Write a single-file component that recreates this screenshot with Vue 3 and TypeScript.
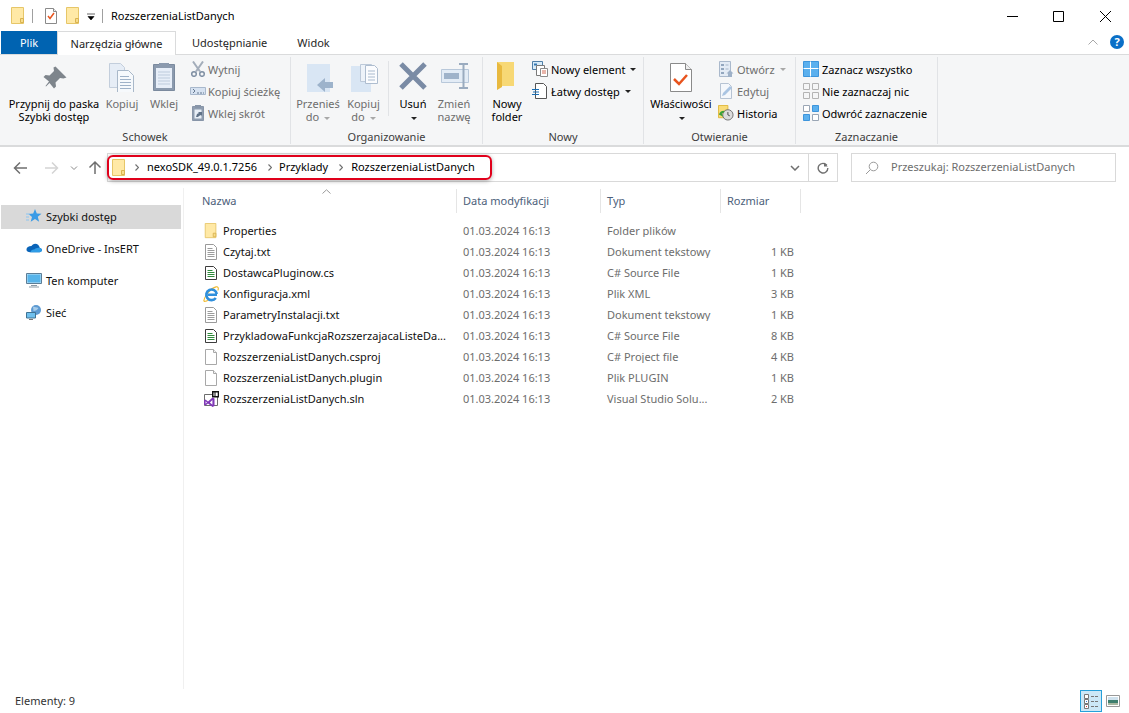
<script setup lang="ts">
interface FileRow { name: string; icon: string; date: string; type: string; size: string }
const d = '01.03.2024 16:13'
const files: FileRow[] = [
  { name: 'Properties', icon: 'folder', date: d, type: 'Folder plików', size: '' },
  { name: 'Czytaj.txt', icon: 'txt', date: d, type: 'Dokument tekstowy', size: '1 KB' },
  { name: 'DostawcaPluginow.cs', icon: 'cs', date: d, type: 'C# Source File', size: '1 KB' },
  { name: 'Konfiguracja.xml', icon: 'ie', date: d, type: 'Plik XML', size: '3 KB' },
  { name: 'ParametryInstalacji.txt', icon: 'txt', date: d, type: 'Dokument tekstowy', size: '1 KB' },
  { name: 'PrzykladowaFunkcjaRozszerzajacaListeDa...', icon: 'cs', date: d, type: 'C# Source File', size: '8 KB' },
  { name: 'RozszerzeniaListDanych.csproj', icon: 'blank', date: d, type: 'C# Project file', size: '4 KB' },
  { name: 'RozszerzeniaListDanych.plugin', icon: 'blank', date: d, type: 'Plik PLUGIN', size: '1 KB' },
  { name: 'RozszerzeniaListDanych.sln', icon: 'sln', date: d, type: 'Visual Studio Solu...', size: '2 KB' }
]
const side = [
  { name: 'Szybki dostęp', icon: 'star', on: true },
  { name: 'OneDrive - InsERT', icon: 'cloud', on: false },
  { name: 'Ten komputer', icon: 'pc', on: false },
  { name: 'Sieć', icon: 'net', on: false }
]
</script>

<template>
  <div class="win">
    <svg class="defs" aria-hidden="true">
      <symbol id="folder" viewBox="0 0 16 18"><path d="M1.500.5h12v16h-12z" fill="#ffe9a6" stroke="#e6c668"/><path d="M10.500 11.500h3v4h-3z" fill="#f7dc8b" stroke="#d9b350"/></symbol>
      <symbol id="propdoc" viewBox="0 0 16 18"><path d="M2.500 1.500h8l3 3v12h-11z" fill="#fff" stroke="#8a8a8a"/><path d="M10.500 1.500v3h3" fill="#eee" stroke="#8a8a8a"/><path d="M5 9l2 2.500L11 6" fill="none" stroke="#e8541e" stroke-width="1.500"/></symbol>
      <symbol id="bigprop" viewBox="0 0 32 32"><path d="M5.500 3.500h15l6 6v22h-21z" fill="#fff" stroke="#8a8a8a"/><path d="M20.500 3.500v6h6" fill="#eee" stroke="#8a8a8a"/><path d="M9 19l5 5 8-9" fill="none" stroke="#e8541e" stroke-width="2.500"/></symbol>
      <symbol id="txt" viewBox="0 0 16 16"><path d="M2.500.5h8l3 3v12h-11z" fill="#fff" stroke="#9a9a9a"/><path d="M4.500 4.500h5M4.500 6.500h7M4.500 8.500h7M4.500 10.500h7M4.500 12.500h7" stroke="#9c9c9c"/></symbol>
      <symbol id="cs" viewBox="0 0 16 16"><path d="M2.500 1.500h8l3 3v10h-11z" fill="#fff" stroke="#3d3d3d"/><path d="M4.500 5.500h5M4.500 7.500h7M4.500 9.500h7M4.500 11.500h7" stroke="#2e8b3a"/></symbol>
      <symbol id="blank" viewBox="0 0 16 16"><path d="M2.500.5h8l3 3v12h-11z" fill="#fff" stroke="#a8a8a8"/><path d="M10.500.5v3h3" fill="#f2f2f2" stroke="#a8a8a8"/></symbol>
      <symbol id="ie" viewBox="0 0 16 16"><path d="M.8 15C1.500 10 8 2 13 .9c2.300-.5 2.800 1.600 1.800 3.600M.8 15c.5.800 2.500.3 4-.8" fill="none" stroke="#f0b92a" stroke-width="1.100"/><path d="M4.800 8.800h9.200M13.800 8a5.300 5.300 0 1 0-1 4" fill="none" stroke="#2f8fdc" stroke-width="2.600"/></symbol>
      <symbol id="sln" viewBox="0 0 16 16"><path d="M1.500 3.500h13v11h-13z" fill="#fff" stroke="#6d6d6d"/><path d="M9 0h7v6.500H9z" fill="#111"/><path d="M10.500 1.500h1v3.500h-1zM12.500 1.500h2.200v3.500h-2.200z" fill="#fff"/><path d="M1 9.500L2.500 8.500 5 10.500 9.500 6.500 11.500 7.500V15l-2 1L5 12.500 2.500 14.500 1 13.500z" fill="#8039b8"/><path d="M2.600 10.300v2.400L4 11.500zM9.400 9l-2.500 2.500 2.500 2.300z" fill="#fff"/></symbol>
      <symbol id="star" viewBox="0 0 16 16"><path d="M9 1l1.800 4.500 4.700.3-3.700 3 1.300 5L9 11 4.700 13.800 6 9 2.500 6l4.700-.4z" fill="#3a9be6"/><path d="M0 6h4M0 9h3M0 12h3" stroke="#8dc5f0"/></symbol>
      <symbol id="cloud" viewBox="0 0 17 12"><path d="M4.500 10.500h9.800c1.600 0 2.700-1 2.700-2.300 0-1.300-1-2.200-2.300-2.300C14.200 3.200 12 1.500 9.800 1.500 8 1.500 6.500 2.500 5.800 4 2.800 4 .5 5.500.5 7.800c0 1.700 1.600 2.700 4 2.700z" fill="#0a64b8"/><path d="M4.500 10.500h9.800c1.600 0 2.700-1 2.700-2.300 0-1.300-1-2.200-2.300-2.300-2.400-.6-4.500.2-6 1.800-1.300-.4-2.800 0-4.200 2.800z" fill="#2f9ce6"/></symbol>
      <symbol id="pc" viewBox="0 0 16 16"><path d="M.5 1.500h15v10H.5z" fill="#bfe3f7" stroke="#5c7d96"/><path d="M1.500 2.500h13v8h-13z" fill="#57b4ea"/><path d="M5 13.500h6M3 15h10" stroke="#8a9aa6"/></symbol>
      <symbol id="net" viewBox="0 0 16 16"><circle cx="10" cy="6" r="5" fill="#5d9ad2"/><path d="M7 2.500c2 1 4 .5 5.500 1.500-1 2-3 3-5 3z" fill="#a8cdea"/><path d="M.5 8.500h9v5.500h-9z" fill="#6fc0ee" stroke="#3f7394"/><path d="M3 15.500h4" stroke="#777"/></symbol>
      <symbol id="pin" viewBox="0 0 32 32"><path d="M14.500 6.500l11 11-3 1-3.500-.5-4.500 4.500.5 4-2 2-4.500-5.500L5 26.500l-.5-.5 3.500-4.500-5.500-4.500 2-2 4 .5L13 11l-.5-3.500z" fill="#7e858c" transform="translate(3 0)"/></symbol>
      <symbol id="copy" viewBox="0 0 32 32"><path d="M3.500 3.500h11l4 4v20h-15z" fill="#e6edf6" stroke="#c3cedc"/><path d="M11.500 10.500h11l5 5v17h-16z" fill="#f6f9fc" stroke="#a9b8c9"/><path d="M14 16.500h9M14 19.500h11M14 22.500h11M14 25.500h11M14 28.500h11" stroke="#9fb2c8"/></symbol>
      <symbol id="paste" viewBox="0 0 32 32"><path d="M5.500 4.500h21v26h-21z" fill="#8b9aae" stroke="#7b8a9e"/><path d="M8 8h16v20H8z" fill="#e7eef8"/><path d="M10 12h12M10 15h12M10 18h12M10 21h12M10 24h12" stroke="#bdcbdc"/><path d="M11 3h10v4H11z" fill="#8b9aae"/></symbol>
      <symbol id="cut" viewBox="0 0 16 16"><path d="M3 .5l7 10M13 .5l-7 10" stroke="#a3adba" stroke-width="2"/><circle cx="4" cy="13" r="2.300" fill="none" stroke="#7f8fa3" stroke-width="1.500"/><circle cx="12" cy="13" r="2.300" fill="none" stroke="#7f8fa3" stroke-width="1.500"/></symbol>
      <symbol id="path" viewBox="0 0 16 16"><path d="M.5 4.500h15v7H.5z" fill="#d6e2f1" stroke="#a8b8cc"/><path d="M3 6l2 2-2 2M7 10h2M10 10h2M13 10h1" stroke="#65788f" fill="none"/></symbol>
      <symbol id="short" viewBox="0 0 16 16"><path d="M2.500 1.500h11v14h-11z" fill="#8f9db0" stroke="#8795a8"/><path d="M5 0h6v3H5z" fill="#8795a8"/><path d="M4.500 4.500h7v9h-7z" fill="#e7eef7"/><path d="M6 12l1-3 2-1-1-1h4v4l-1-1-2 1-1 1z" fill="#5f7288"/></symbol>
      <symbol id="move" viewBox="0 0 32 32"><path d="M5 4h23v28H5z" fill="#d9e6f4"/><path d="M15 25l8-7v4h8v6h-8v4z" fill="#9db3cb"/></symbol>
      <symbol id="copyto" viewBox="0 0 32 32"><path d="M3 6h20v26H3z" fill="#d9e6f4"/><path d="M12.500 4.500h11l3 3v14h-14z" fill="#eef3f9" stroke="#bcc9d9"/><path d="M17.500 5.500h9l3 3v15h-12z" fill="#fbfcfe" stroke="#aebdcf"/><path d="M20 11h7M20 14h7M20 17h7M20 20h7" stroke="#a9bace"/></symbol>
      <symbol id="del" viewBox="0 0 32 32"><path d="M4 4l24 24M28 4L4 28" stroke="#7a8ba5" stroke-width="5"/></symbol>
      <symbol id="rename" viewBox="0 0 32 32"><path d="M3.500 9.500h27v13h-27z" fill="#e3ecf6" stroke="#b8c8da"/><path d="M6 13h15v6H6z" fill="#9fb3ca"/><path d="M21 4h9M21 28h9M25.500 4v24" stroke="#9aabbf" stroke-width="2"/></symbol>
      <symbol id="newfolder" viewBox="0 0 32 32"><path d="M6 2h17v24H9l-3 4z" fill="#f7d875"/><path d="M6 2l5 4v21l-5 3z" fill="#e8b93f"/></symbol>
      <symbol id="newitem" viewBox="0 0 16 16"><path d="M.5.500h10v8H.5z" fill="#d7ecfa" stroke="#4f7fa8"/><path d="M2 2.500h3v2H2z" fill="#3478b4"/><path d="M4.500 4.500h8v10h-8z" fill="#fff" stroke="#7a7a7a"/><path d="M8.500 7.500h7v8h-7z" fill="#fff" stroke="#8a8a8a"/><path d="M10 10h4M10 12h4" stroke="#d26b55"/></symbol>
      <symbol id="easy" viewBox="0 0 16 16"><path d="M3.500.5h8l3 3v12h-11z" fill="#fff" stroke="#555"/><path d="M0 6.500h7M1 9h6M0 11.500h7" stroke="#1a6fb5"/></symbol>
      <symbol id="open" viewBox="0 0 16 16"><path d="M1.500 .5h11v15h-11z" fill="#e3ebf5" stroke="#aab9cc"/><path d="M3 3h3v2H3zM3 7h3v2H3zM3 11h3v2H3z" fill="#93a7bf"/><path d="M7.500 4h3M7.500 8h3" stroke="#a8b7c9"/><path d="M12 9l3.500 3.500H14V16h-4v-3.500H8.500z" fill="#9eb1c8"/></symbol>
      <symbol id="edit" viewBox="0 0 16 16"><path d="M2.500.5h8l3 3v12h-11z" fill="#f4f7fb" stroke="#b6c3d3"/><path d="M4 13l1-3 7-7 2 2-7 7z" fill="#a9c4e2"/></symbol>
      <symbol id="hist" viewBox="0 0 17 17"><path d="M.5.500h10v13H.5z" fill="#f9dc78" stroke="#e0b93e"/><circle cx="10.500" cy="10.500" r="5.500" fill="#dcdcdc" stroke="#6d6d6d"/><path d="M10.500 7.500v3l2 1" stroke="#444" fill="none"/><path d="M1 10c1-3 3-4 5-4l1 1.500-3 1.500 1.500 3.500z" fill="#3aa13a"/></symbol>
      <symbol id="selall" viewBox="0 0 16 16"><path d="M.5.500h15v15H.5z" fill="#5bb0ee" stroke="#3d95dc"/><path d="M7.500.5v15M.5 7.500h15" stroke="#fff"/></symbol>
      <symbol id="selnone" viewBox="0 0 16 16"><path d="M.5.500h6v6h-6zM9.500.5h6v6h-6zM.5 9.500h6v6h-6zM9.500 9.500h6v6h-6z" fill="none" stroke="#b4b4b4"/></symbol>
      <symbol id="selinv" viewBox="0 0 16 16"><path d="M.5.500h6v6h-6zM9.500 9.500h6v6h-6z" fill="#fff" stroke="#9aa6b5"/><path d="M9.500.5h6v6h-6zM.5 9.500h6v6h-6z" fill="#5bb0ee" stroke="#3d95dc"/></symbol>
      <symbol id="crumb" viewBox="0 0 4 7"><path d="M.5.5l3 3-3 3" fill="none" stroke="#707070" stroke-width="1.200"/></symbol>
    </svg>

    <header class="title">
      <svg class="i qa1"><use href="#folder"/></svg>
      <span class="qsep"></span>
      <svg class="i qa2"><use href="#propdoc"/></svg>
      <svg class="i qa3"><use href="#folder"/></svg>
      <svg class="qa4" viewBox="0 0 8 8"><path d="M0 1h8M1 3.500h6L4 7z" fill="#000" stroke="#000" stroke-width=".6"/></svg>
      <span class="qsep q2"></span>
      <span class="title-text">RozszerzeniaListDanych</span>
      <div class="winbtns">
        <svg viewBox="0 0 46 30" class="wb"><path d="M16 15.500h11" stroke="#000"/></svg>
        <svg viewBox="0 0 46 30" class="wb"><path d="M16.500 10.500h10v10h-10z" fill="none" stroke="#000"/></svg>
        <svg viewBox="0 0 46 30" class="wb"><path d="M17 10l11 11M28 10L17 21" stroke="#000"/></svg>
      </div>
    </header>

    <nav class="tabs">
      <span class="tab file">Plik</span>
      <span class="tab active">Narzędzia główne</span>
      <span class="tab t3">Udostępnianie</span>
      <span class="tab t4">Widok</span>
      <svg class="collapse" viewBox="0 0 10 6"><path d="M.5 5.500L5 1l4.500 4.500" fill="none" stroke="#a8a8a8"/></svg>
      <span class="help">?</span>
    </nav>

    <section class="ribbon">
      <div class="group g1">
        <div class="body">
          <div class="big w100"><svg class="li"><use href="#pin"/></svg><span>Przypnij do paska<br>Szybki dostęp</span></div>
          <div class="big w36 off"><svg class="li"><use href="#copy"/></svg><span>Kopiuj</span></div>
          <div class="big w48 off"><svg class="li"><use href="#paste"/></svg><span>Wklej</span></div>
          <div class="col p2 off clip">
            <div class="small"><svg class="i"><use href="#cut"/></svg>Wytnij</div>
            <div class="small"><svg class="i"><use href="#path"/></svg>Kopiuj ścieżkę</div>
            <div class="small"><svg class="i"><use href="#short"/></svg>Wklej skrót</div>
          </div>
        </div>
        <div class="label">Schowek</div>
      </div>
      <div class="group g2">
        <div class="body">
          <div class="big w46 ml4 off"><svg class="li"><use href="#move"/></svg><span>Przenieś<br>do <i class="car grey"></i></span></div>
          <div class="big w45 off"><svg class="li"><use href="#copyto"/></svg><span>Kopiuj<br>do <i class="car grey"></i></span></div>
          <span class="vsep"></span>
          <div class="big w48"><svg class="li"><use href="#del"/></svg><span>Usuń<br><i class="car"></i></span></div>
          <div class="big w34 off"><svg class="li"><use href="#rename"/></svg><span>Zmień<br>nazwę</span></div>
        </div>
        <div class="label">Organizowanie</div>
      </div>
      <div class="group g3">
        <div class="body">
          <div class="big w46 ml1"><svg class="li"><use href="#newfolder"/></svg><span>Nowy<br>folder</span></div>
          <div class="col p2">
            <div class="small"><svg class="i"><use href="#newitem"/></svg>Nowy element <i class="car"></i></div>
            <div class="small"><svg class="i"><use href="#easy"/></svg>Łatwy dostęp <i class="car"></i></div>
          </div>
        </div>
        <div class="label">Nowy</div>
      </div>
      <div class="group g4">
        <div class="body">
          <div class="big w70 ml2"><svg class="li"><use href="#bigprop"/></svg><span>Właściwości<br><i class="car"></i></span></div>
          <div class="col p2">
            <div class="small off"><svg class="i"><use href="#open"/></svg>Otwórz <i class="car grey"></i></div>
            <div class="small off"><svg class="i"><use href="#edit"/></svg>Edytuj</div>
            <div class="small"><svg class="i"><use href="#hist"/></svg>Historia</div>
          </div>
        </div>
        <div class="label">Otwieranie</div>
      </div>
      <div class="group g5">
        <div class="body">
          <div class="col p7">
            <div class="small"><svg class="i"><use href="#selall"/></svg>Zaznacz wszystko</div>
            <div class="small"><svg class="i"><use href="#selnone"/></svg>Nie zaznaczaj nic</div>
            <div class="small"><svg class="i"><use href="#selinv"/></svg>Odwróć zaznaczenie</div>
          </div>
        </div>
        <div class="label">Zaznaczanie</div>
      </div>
    </section>

    <div class="navbar">
      <svg class="n-back" viewBox="0 0 15 14"><path d="M14 7H2M7 1.500L1.500 7 7 12.500" fill="none" stroke="#6f6f6f" stroke-width="1.500"/></svg>
      <svg class="n-fwd" viewBox="0 0 15 14"><path d="M1 7h12M8 1.500L13.500 7 8 12.500" fill="none" stroke="#d4d4d4" stroke-width="1.500"/></svg>
      <svg class="n-chev" viewBox="0 0 8 6"><path d="M1 1.500l3 3 3-3" fill="none" stroke="#8a8a8a"/></svg>
      <svg class="n-up" viewBox="0 0 14 15"><path d="M7 14V2M1.500 7.500L7 2l5.500 5.500" fill="none" stroke="#6f6f6f" stroke-width="1.500"/></svg>
      <div class="addr">
        <svg class="i addr-f"><use href="#folder"/></svg>
        <svg class="crumb-sep s1"><use href="#crumb"/></svg><span class="crumb c1">nexoSDK_49.0.1.7256</span>
        <svg class="crumb-sep"><use href="#crumb"/></svg><span class="crumb">Przyklady</span>
        <svg class="crumb-sep"><use href="#crumb"/></svg><span class="crumb c1">RozszerzeniaListDanych</span>
        <svg class="addr-dd" viewBox="0 0 10 6"><path d="M1 1l4 4 4-4" fill="none" stroke="#6f6f6f" stroke-width="1.500"/></svg>
        <span class="addr-refresh">
          <svg viewBox="0 0 12 12"><path d="M9.800 3.200A4.800 4.800 0 1 0 10.800 6" fill="none" stroke="#6f6f6f" stroke-width="1.400"/><path d="M7 .5v4h3.800z" fill="#6f6f6f"/></svg>
        </span>
        <div class="mark"></div>
      </div>
      <div class="search">
        <svg viewBox="0 0 14 14"><circle cx="8.500" cy="5.500" r="4.300" fill="none" stroke="#9a9a9a"/><path d="M5.300 8.700L1 13" stroke="#9a9a9a"/></svg>
        <span>Przeszukaj: RozszerzeniaListDanych</span>
      </div>
    </div>

    <main class="main">
      <aside class="side">
        <div v-for="s in side" :key="s.name" class="side-row" :class="{ on: s.on }">
          <svg class="i"><use :href="'#' + s.icon"/></svg>{{ s.name }}
        </div>
      </aside>
      <section class="list">
        <div class="sort"><svg viewBox="0 0 9 5"><path d="M.5 4.500L4.500.8l4 3.700" fill="none" stroke="#9a9a9a"/></svg></div>
        <div class="row head">
          <div class="c">Nazwa</div><div class="c">Data modyfikacji</div><div class="c">Typ</div><div class="c">Rozmiar</div>
        </div>
        <div v-for="f in files" :key="f.name" class="row item">
          <div class="c nm"><svg class="i"><use :href="'#' + f.icon"/></svg><span>{{ f.name }}</span></div>
          <div class="c g">{{ f.date }}</div>
          <div class="c g">{{ f.type }}</div>
          <div class="c g sz">{{ f.size }}</div>
        </div>
      </section>
    </main>

    <footer class="status">
      <span class="count">Elementy: 9</span>
      <span class="vbtn on">
        <svg viewBox="0 0 16 16"><path d="M1.500 1.500h4v4h-4zM1.500 6.500h4v4h-4zM1.500 11.500h4v4h-4z" fill="#fff" stroke="#777"/><path d="M8 3.500h3M12 3.500h3M8 8.500h3M12 8.500h3M8 13.500h3M12 13.500h3" stroke="#777"/><path d="M3 8h1v1H3z" fill="#3a7bd5"/><path d="M3 13h1v1H3z" fill="#d33"/></svg>
      </span>
      <span class="vbtn pic">
        <svg viewBox="0 0 14 12"><path d="M.5.500h13v11H.5z" fill="#fff" stroke="#999"/><path d="M2 2h10v3H2z" fill="#cfe2ee"/><path d="M2 5h10v3H2z" fill="#3f7f6e"/><path d="M2 8h10v2H2z" fill="#a9b7a0"/></svg>
      </span>
    </footer>
  </div>
</template>

<style>
html, body { margin: 0; background: #fff; }
</style>

<style scoped>
.win {
  height: 713px; width: 1129px; overflow: hidden; display: flex; flex-direction: column;
  background: #fff; color: #000; font-family: "Noto Sans", "Open Sans", sans-serif; font-size: 11px; line-height: 13px;
}
.defs { position: absolute; width: 0; height: 0; }
.i { width: 16px; height: 16px; flex: none; display: block; }
.title { height: 31px; flex: none; display: flex; align-items: center; box-sizing: border-box; padding-left: 10px; }
.qa1 { height: 18px; }
.qsep { width: 1px; height: 14px; background: #a0a0a0; margin-left: 6px; }
.qa2 { height: 18px; margin-left: 10px; }
.qa3 { height: 18px; margin-left: 6px; }
.qa4 { width: 8px; height: 8px; margin-left: 6px; margin-top: 3px; }
.q2 { margin-left: 7px; }
.title-text { margin-left: 8px; }
.winbtns { margin-left: auto; display: flex; }
.wb { width: 46px; height: 30px; display: block; }
.tabs { height: 24px; flex: none; display: flex; align-items: stretch; box-sizing: border-box; padding-left: 1px; position: relative; border-bottom: 1px solid #dadbdc; }
.tab { display: flex; align-items: center; justify-content: center; color: #262626; }
.file { width: 56px; background: #0063b1; color: #fff; height: 23px; }
.active { width: 119px; background: #fff; border: 1px solid #dadbdc; border-bottom: 0; box-sizing: border-box; height: 24px; color: #222; }
.t3 { margin-left: 16px; }
.t4 { margin-left: 30px; }
.collapse { width: 10px; height: 6px; margin-left: auto; margin-right: 12px; align-self: center; position: relative; top: -1px; }
.help { width: 14px; height: 14px; border-radius: 50%; background: #0a6fc7; color: #fff; font-weight: 700; font-size: 11px; display: flex; align-items: center; justify-content: center; align-self: center; margin-right: 5px; position: relative; top: -1px; }
.ribbon { height: 92px; flex: none; box-sizing: border-box; display: flex; background: #f5f6f7; padding-top: 2px; border-bottom: 2px solid #dadbdc; }
.group { height: 87px; box-sizing: border-box; border-right: 1px solid #e1e3e6; display: flex; flex-direction: column; flex: none; }
.g1 { width: 291px; } .g2 { width: 192px; } .g3 { width: 161px; } .g4 { width: 152px; } .g5 { width: 142px; }
.body { height: 72px; display: flex; align-items: flex-start; }
.label { height: 15px; text-align: center; color: #3c3c3c; line-height: 15px; }
.big { display: flex; flex-direction: column; align-items: center; text-align: center; padding-top: 3px; flex: none; }
.li { width: 32px; height: 32px; display: block; margin-bottom: 5px; }
.w100 { width: 100px; margin-left: 4px; } .w36 { width: 36px; } .w48 { width: 48px; } .w46 { width: 46px; } .w45 { width: 45px; } .w34 { width: 34px; } .w70 { width: 70px; }
.ml4 { margin-left: 4px; } .ml1 { margin-left: 1px; } .ml2 { margin-left: 2px; }
.off { color: #6d6d6d; }
.col { display: flex; flex-direction: column; margin-top: 1px; }
.p2 { padding-left: 2px; } .p7 { padding-left: 7px; }
.small { height: 22px; display: flex; align-items: center; gap: 3px; white-space: nowrap; }
.clip .small { gap: 2px; }
.vsep { width: 1px; height: 55px; background: #e1e3e6; margin: 4px 0 0 2px; flex: none; }
.car { display: inline-block; border: 3px solid transparent; border-top: 3px solid #222; border-bottom: 0; vertical-align: middle; margin-left: 2px; font-style: normal; }
.car.grey { border-top-color: #a8a8a8; }
.navbar { height: 41px; flex: none; display: flex; align-items: center; }
.n-back { width: 15px; height: 14px; margin-left: 13px; }
.n-fwd { width: 15px; height: 14px; margin-left: 16px; }
.n-chev { width: 8px; height: 6px; margin-left: 11px; }
.n-up { width: 14px; height: 15px; margin-left: 10px; }
.addr { position: relative; margin-left: 5px; width: 731px; height: 29px; box-sizing: border-box; border: 1px solid #d9d9d9; display: flex; align-items: center; padding-left: 3px; }
.addr-f { height: 18px; }
.crumb-sep { width: 4px; height: 7px; flex: none; margin-left: 11px; }
.crumb-sep.s1 { margin-left: 8px; }
.crumb { margin-left: 7px; white-space: nowrap; padding-bottom: 2px; }
.crumb.c1 { margin-left: 8px; }
.addr-dd { width: 10px; height: 6px; margin-left: auto; margin-right: 8px; }
.addr-refresh { width: 29px; height: 27px; border-left: 1px solid #d9d9d9; display: flex; align-items: center; justify-content: center; box-sizing: border-box; }
.addr-refresh svg { width: 12px; height: 12px; }
.mark { position: absolute; left: -1px; top: 1px; width: 385px; height: 25px; box-sizing: border-box; border: 2px solid #e0001b; border-radius: 6px; box-shadow: 0 1px 4px rgba(0,0,0,.35); pointer-events: none; }
.search { margin-left: 13px; width: 265px; height: 29px; box-sizing: border-box; border: 1px solid #d9d9d9; display: flex; align-items: center; padding-left: 13px; color: #6d6d6d; white-space: nowrap; }
.search svg { width: 14px; height: 14px; }
.search span { margin-left: 12px; padding-bottom: 2px; }
.main { flex: 1; display: flex; min-height: 0; }
.side { width: 184px; flex: none; box-sizing: border-box; border-right: 1px solid #f0f0f0; padding: 17px 0 0 1px; }
.side-row { height: 24px; width: 180px; margin-bottom: 8px; display: flex; align-items: center; gap: 4px; box-sizing: border-box; padding: 0 0 2px 25px; color: #111; }
.side-row.on { background: #d9d9d9; }
.list { position: relative; flex: 1; padding-left: 12px; }
.sort { position: absolute; left: 138px; top: 1px; line-height: 0; }
.sort svg { width: 9px; height: 5px; }
.row { display: grid; grid-template-columns: 261px 144px 120px 80px; }
.head { height: 24px; margin-top: 1px; margin-bottom: 7px; color: #4c607a; }
.head .c { display: flex; align-items: center; padding: 0 0 2px 6px; border-right: 1px solid #e5e5e5; box-sizing: border-box; }
.item { height: 21px; align-items: center; }
.item .c { padding-left: 6px; white-space: nowrap; overflow: hidden; }
.nm { display: flex; align-items: center; gap: 4px; box-sizing: border-box; padding-left: 7px !important; color: #111; }
.g { color: #6d6d6d; }
.sz { text-align: right; padding-right: 7px; }
.status { height: 24px; flex: none; display: flex; align-items: center; padding-left: 15px; color: #333; box-sizing: border-box; }
.count { padding-bottom: 2px; }
.vbtn { width: 22px; height: 22px; box-sizing: border-box; display: flex; align-items: center; justify-content: center; }
.vbtn svg { width: 16px; height: 16px; display: block; }
.vbtn.on { margin-left: auto; background: #cce8f7; border: 1px solid #26a0da; }
.pic { width: 18px; margin-left: 2px; margin-right: 7px; }
.pic svg { width: 14px; height: 12px; }
</style>
